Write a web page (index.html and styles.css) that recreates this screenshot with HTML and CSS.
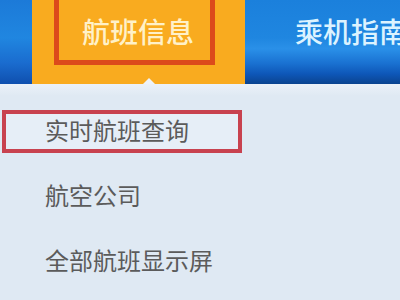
FILE: index.html
```html
<!DOCTYPE html>
<html lang="zh-CN">
<head>
<meta charset="utf-8">
<link rel="stylesheet" href="styles.css">
</head>
<body>
<nav class="nav">
  <div class="nav-edge"></div>
  <div class="nav-tab active">
    <div class="mark"><span class="tab-text">航班信息</span></div>
  </div>
  <div class="nav-tab blue"><span class="tab-text">乘机指南</span></div>
</nav>
<ul class="menu">
  <li class="row"><span class="item current">实时航班查询</span></li>
  <li class="row"><span class="item">航空公司</span></li>
  <li class="row"><span class="item">全部航班显示屏</span></li>
</ul>
</body>
</html>
```
FILE: styles.css
```css
html, body {
  margin: 0;
  padding: 0;
}
body {
  width: 400px;
  height: 300px;
  overflow: hidden;
  background: #dfe9f3;
  font-family: "Noto Sans CJK SC", "Microsoft YaHei", sans-serif;
}
.nav {
  display: flex;
  height: 84px;
}
.nav-edge {
  width: 32px;
  flex: none;
  background: linear-gradient(to bottom, #1c7ad8 0%, #2086e0 45%, #1a6ccf 75%, #0f4fae 100%);
}
.nav-tab {
  position: relative;
  flex: none;
}
.nav-tab.active {
  width: 213px;
  background: #f9ab1f;
  padding-left: 22px;
  box-sizing: border-box;
}
.nav-tab.active::after {
  content: "";
  position: absolute;
  left: 111px;
  bottom: 0;
  border-left: 6px solid transparent;
  border-right: 6px solid transparent;
  border-bottom: 6px solid #eef3f9;
}
.mark {
  width: 161px;
  height: 65px;
  box-sizing: border-box;
  border: 5px solid #dc4a1b;
  border-top: 0;
  padding: 17px 0 0 23px;
}
.tab-text {
  display: block;
  font-size: 28px;
  line-height: 28px;
  font-weight: 500;
  white-space: nowrap;
}
.mark .tab-text {
  color: #fff1c8;
}
.nav-tab.blue {
  flex: 1;
  padding: 17px 0 0 50px;
  background: linear-gradient(to bottom, #1b80dc 0%, #1f86e0 45%, #2a90e8 58%, #1a72d2 75%, #0e57b8 88%, #0a438f 100%);
  overflow: hidden;
}
.nav-tab.blue .tab-text {
  color: #dcf3ff;
}
.menu {
  list-style: none;
  margin: 0;
  padding: 13px 0 0 0;
  background: linear-gradient(to bottom, #ebf1f8 0px, #dfe9f3 12px);
}
.row {
  height: 65px;
  display: flex;
  align-items: center;
}
.item {
  display: flex;
  align-items: center;
  box-sizing: border-box;
  width: 240px;
  height: 43px;
  margin: 4px 0 0 2px;
  padding: 0 0 4px 39px;
  border: 4px solid transparent;
  font-size: 24px;
  color: #5b5b5b;
  white-space: nowrap;
}
.item.current {
  border-color: #c8424f;
  background: #e6eef7;
}
```
